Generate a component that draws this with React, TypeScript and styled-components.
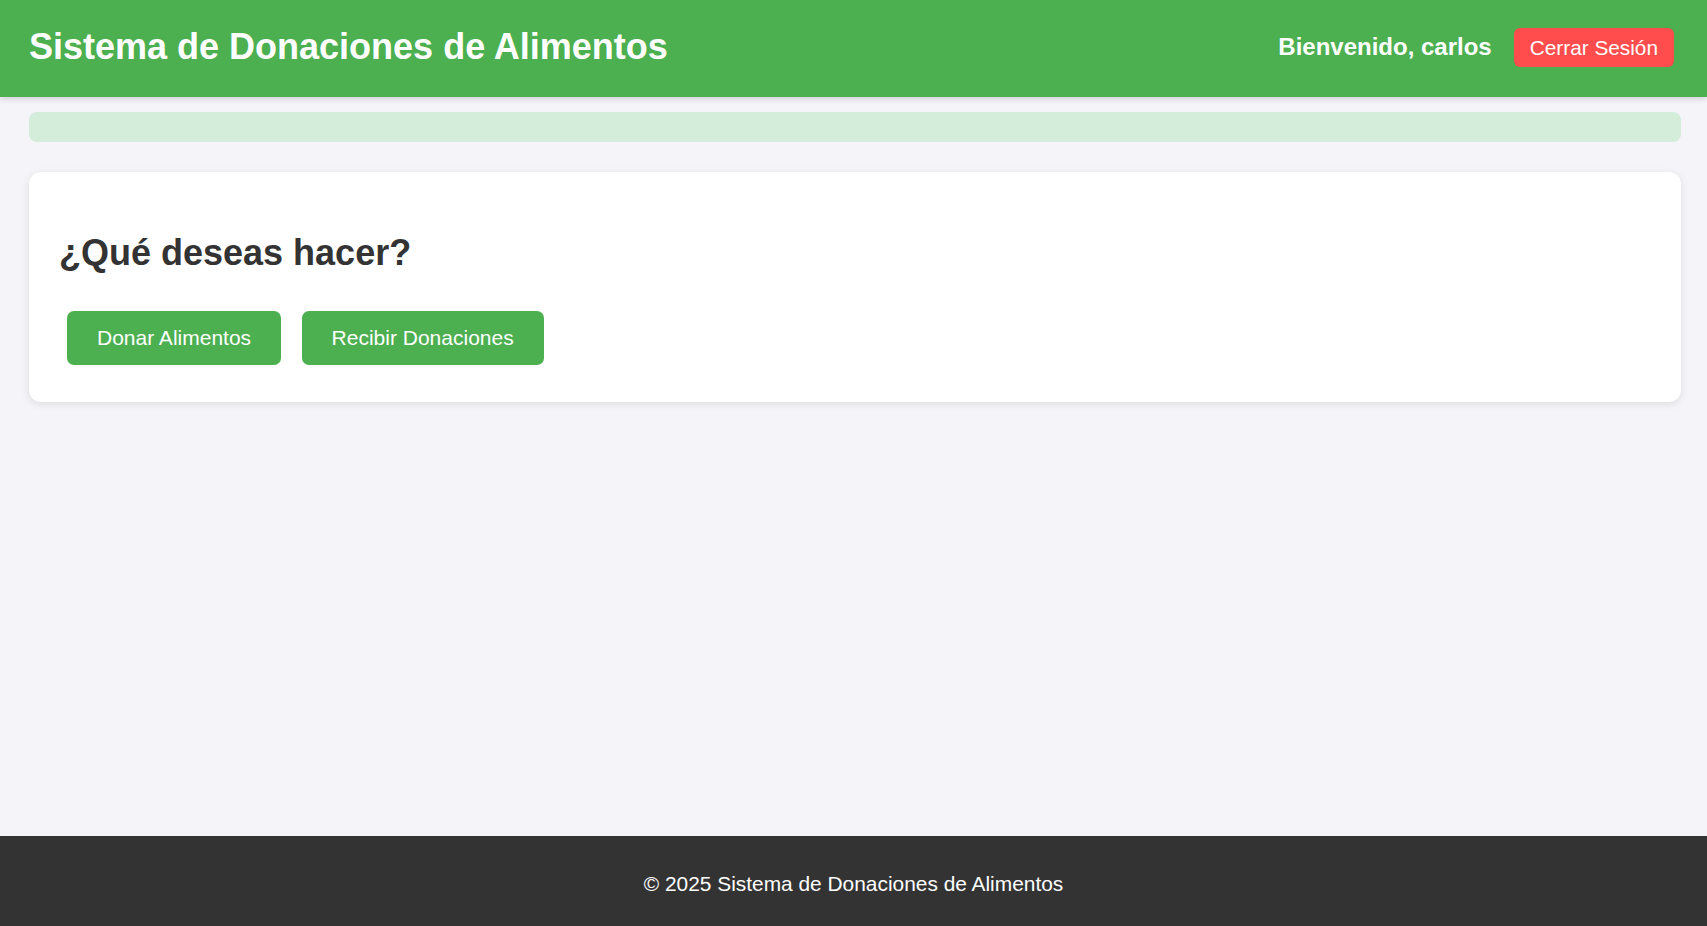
import React, { FunctionComponent } from "react"
import styled, { createGlobalStyle } from "styled-components"

const GlobalStyle = createGlobalStyle`
    body {
        margin: 0;
        font-family: "Liberation Sans", Arial, sans-serif;
        background: #f4f4f9;
    }
`

const Page = styled.div`
    min-height: 100vh;
    display: flex;
    flex-direction: column;
`

const Header = styled.header`
    position: relative;
    z-index: 1;
    height: 97px;
    box-sizing: border-box;
    padding: 0 33px 4px 29px;
    display: flex;
    align-items: center;
    justify-content: space-between;
    background: #4caf50;
    color: white;
    box-shadow: 0 2px 6px rgba(0, 0, 0, 0.15);
`

const Title = styled.h1`
    margin: 0;
    font-size: 36px;
    font-weight: bold;
`

const UserArea = styled.div`
    display: flex;
    align-items: center;
    gap: 22px;
`

const Welcome = styled.span`
    font-size: 24px;
    font-weight: bold;
`

const LogoutButton = styled.button`
    height: 39px;
    padding: 0 16px;
    margin-top: 2px;
    border: none;
    border-radius: 6px;
    background: #ff4d4d;
    color: white;
    font-family: inherit;
    font-size: 20.8px;
    cursor: pointer;
`

const Main = styled.main`
    flex: 1;
    padding: 15px 26px 0 29px;
`

const StatusBar = styled.div`
    height: 30px;
    margin-bottom: 30px;
    border-radius: 8px;
    background: #d4edda;
`

const Card = styled.section`
    padding: 28px 28px 27px;
    border-radius: 12px;
    background: white;
    box-shadow: 0 2px 8px rgba(0, 0, 0, 0.1);
`

const Heading = styled.h2`
    margin: 32px 0 27px 2px;
    font-size: 36px;
    font-weight: bold;
    color: #333;
`

const Actions = styled.div`
    display: flex;
`

const ActionButton = styled.button`
    margin: 10px 10.5px 10px 10px;
    padding: 15px 30px;
    border: none;
    border-radius: 7px;
    background: #4caf50;
    color: white;
    font-family: inherit;
    font-size: 21px;
    line-height: 24px;
    cursor: pointer;
`

const Footer = styled.footer`
    height: 90px;
    box-sizing: border-box;
    padding-top: 6px;
    display: flex;
    align-items: center;
    justify-content: center;
    background: #333;
    color: white;
    font-size: 20.9px;
`

const App: FunctionComponent = () => {
    return (
        <Page>
            <GlobalStyle />
            <Header>
                <Title>Sistema de Donaciones de Alimentos</Title>
                <UserArea>
                    <Welcome>Bienvenido, carlos</Welcome>
                    <LogoutButton>Cerrar Sesión</LogoutButton>
                </UserArea>
            </Header>
            <Main>
                <StatusBar />
                <Card>
                    <Heading>¿Qué deseas hacer?</Heading>
                    <Actions>
                        <ActionButton>Donar Alimentos</ActionButton>
                        <ActionButton>Recibir Donaciones</ActionButton>
                    </Actions>
                </Card>
            </Main>
            <Footer>© 2025 Sistema de Donaciones de Alimentos</Footer>
        </Page>
    )
}

export default App
